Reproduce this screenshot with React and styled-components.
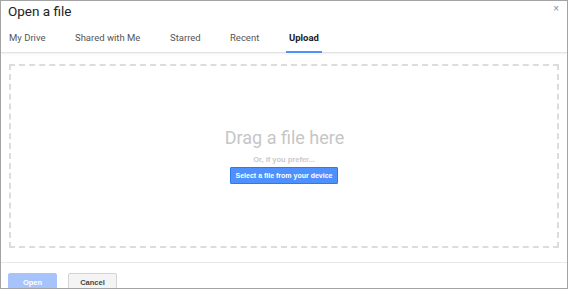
import React from "react";
import styled, { createGlobalStyle } from "styled-components";

const Global = createGlobalStyle`
  html, body { margin: 0; padding: 0; background: #fff; }
  body { font-family: Roboto, Arial, "Liberation Sans", sans-serif; }
`;

const Dialog = styled.div`
  box-sizing: border-box;
  width: 568px;
  height: 289px;
  border: 1px solid #a3a3a3;
  background: #fff;
  display: flex;
  flex-direction: column;
  overflow: hidden;
  & > * { flex-shrink: 0; }
`;

const Header = styled.div`
  height: 24px;
  display: flex;
  align-items: flex-start;
  justify-content: space-between;
  padding: 0 7px 0 7px;
`;

const Title = styled.div`
  font-family: Roboto, Arial, sans-serif;
  font-size: 13.5px;
  color: #222;
  line-height: 15px;
  padding-top: 3px;
`;

const Close = styled.div`
  font-family: Arial, sans-serif;
  font-size: 10px;
  color: #888;
  padding-top: 2px;
  padding-right: 1px;
`;

const TabBar = styled.div`
  height: 27px;
  display: flex;
  align-items: stretch;
  border-bottom: 1px solid #e2e2e2;
  box-shadow: 0 1px 2px rgba(0, 0, 0, 0.06);
  padding-left: 8px;
`;

const Tab = styled.div`
  position: relative;
  font-family: Roboto, Arial, sans-serif;
  font-size: 9.5px;
  color: ${(p) => (p.$active ? "#222" : "#555")};
  font-weight: ${(p) => (p.$active ? 700 : 400)};
  width: ${(p) => p.$w}px;
  padding-top: 7px;
  &::after {
    content: "";
    display: ${(p) => (p.$active ? "block" : "none")};
    position: absolute;
    left: -3px;
    width: 36px;
    bottom: -1px;
    height: 2px;
    background: #4d90fe;
  }
`;

const Body = styled.div`
  padding: 11px 8px 0 8px;
  display: flex;
  flex-direction: column;
`;

const DropZone = styled.div`
  box-sizing: border-box;
  height: 184px;
  border: 2px dashed #dcdcdc;
  display: flex;
  flex-direction: column;
  align-items: center;
  padding-top: 61px;
`;

const DragText = styled.div`
  font-family: Roboto, Arial, sans-serif;
  font-size: 18px;
  color: #c6c6c6;
  line-height: 21px;
  margin-left: 1px;
`;

const Prefer = styled.div`
  font-family: Arial, "Liberation Sans", sans-serif;
  font-size: 7.5px;
  font-weight: 700;
  color: #c9c9c9;
  margin-top: 7px;
  line-height: 9px;
`;

const SelectButton = styled.div`
  margin-top: 3px;
  background: #4d90fe;
  border: 1px solid #3079ed;
  color: #fff;
  font-family: Arial, "Liberation Sans", sans-serif;
  font-size: 7px;
  font-weight: 700;
  height: 15px;
  line-height: 15px;
  padding: 0 5px;
  border-radius: 1px;
`;

const Footer = styled.div`
  margin-top: 14px;
  border-top: 1px solid #e8e8e8;
  padding: 10px 7px 0 7px;
  display: flex;
  gap: 11px;
`;

const Btn = styled.div`
  box-sizing: border-box;
  width: ${(p) => p.$w}px;
  height: 20px;
  line-height: 18px;
  text-align: center;
  font-family: Arial, "Liberation Sans", sans-serif;
  font-size: 7.5px;
  font-weight: 700;
  border-radius: 2px;
  background: ${(p) => (p.$primary ? "#a6c4fb" : "#f4f4f4")};
  border: 1px solid ${(p) => (p.$primary ? "#a6c4fb" : "#d4d4d4")};
  color: ${(p) => (p.$primary ? "#fff" : "#444")};
`;

const tabs = [
  { label: "My Drive", w: 66 },
  { label: "Shared with Me", w: 95 },
  { label: "Starred", w: 60 },
  { label: "Recent", w: 59 },
  { label: "Upload", w: 60, active: true },
];

export default function App() {
  return (
    <>
      <Global />
      <Dialog>
        <Header>
          <Title>Open a file</Title>
          <Close>×</Close>
        </Header>
        <TabBar>
          {tabs.map((t) => (
            <Tab key={t.label} $w={t.w} $active={t.active}>
              {t.label}
            </Tab>
          ))}
        </TabBar>
        <Body>
          <DropZone>
            <DragText>Drag a file here</DragText>
            <Prefer>Or, if you prefer...</Prefer>
            <SelectButton>Select a file from your device</SelectButton>
          </DropZone>
        </Body>
        <Footer>
          <Btn $primary $w={49}>Open</Btn>
          <Btn $w={49}>Cancel</Btn>
        </Footer>
      </Dialog>
    </>
  );
}
